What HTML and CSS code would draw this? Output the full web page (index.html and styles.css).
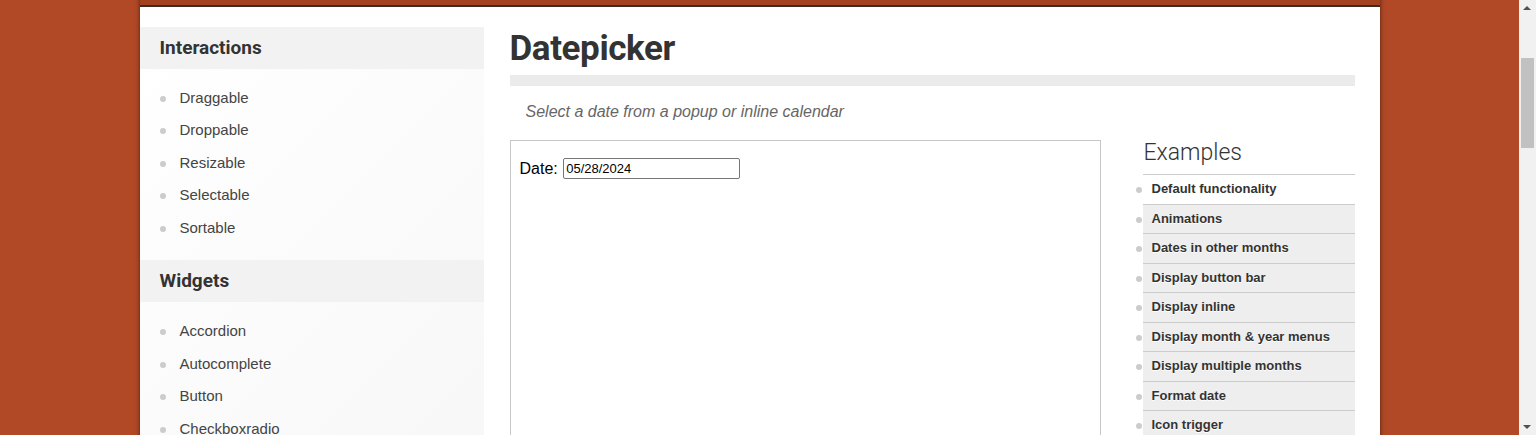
FILE: index.html
```html
<!DOCTYPE html>
<html lang="en">
<head>
<meta charset="utf-8">
<title>Datepicker | jQuery UI</title>
<link rel="stylesheet" href="styles.css">
</head>
<body>
<div class="page">
  <header class="site-header"></header>
  <div class="content">
    <aside class="sidebar">
      <section class="side-section">
        <h3 class="side-title">Interactions</h3>
        <ul class="side-list">
          <li>Draggable</li>
          <li>Droppable</li>
          <li>Resizable</li>
          <li>Selectable</li>
          <li>Sortable</li>
        </ul>
      </section>
      <section class="side-section">
        <h3 class="side-title">Widgets</h3>
        <ul class="side-list">
          <li>Accordion</li>
          <li>Autocomplete</li>
          <li>Button</li>
          <li>Checkboxradio</li>
          <li>Controlgroup</li>
          <li>Datepicker</li>
          <li>Dialog</li>
          <li>Menu</li>
          <li>Progressbar</li>
          <li>Selectmenu</li>
          <li>Slider</li>
          <li>Spinner</li>
          <li>Tabs</li>
          <li>Tooltip</li>
        </ul>
      </section>
    </aside>
    <main class="main">
      <h1 class="page-title">Datepicker</h1>
      <div class="title-bar"></div>
      <p class="subtitle">Select a date from a popup or inline calendar</p>
      <div class="demo-row">
        <div class="demo-frame">
          <label class="date-label">Date: <input class="date-input" type="text" value="05/28/2024"></label>
        </div>
        <div class="examples">
          <h2 class="examples-title">Examples</h2>
          <ul class="examples-list">
            <li class="active">Default functionality</li>
            <li>Animations</li>
            <li>Dates in other months</li>
            <li>Display button bar</li>
            <li>Display inline</li>
            <li>Display month &amp; year menus</li>
            <li>Display multiple months</li>
            <li>Format date</li>
            <li>Icon trigger</li>
            <li>Localize calendar</li>
            <li>Populate alternate field</li>
            <li>Restrict date range</li>
            <li>Select a Date Range</li>
            <li>Show week of the year</li>
          </ul>
        </div>
      </div>
    </main>
  </div>
</div>
<div class="scrollbar" aria-hidden="true">
  <span class="sb-arrow sb-up"></span>
  <span class="sb-thumb"></span>
  <span class="sb-arrow sb-down"></span>
</div>
<script src="script.js"></script>
</body>
</html>
```

FILE: styles.css
```css
html, body {
  margin: 0;
  padding: 0;
}
body {
  background: #b24926;
  font-family: "Liberation Sans", Arial, sans-serif;
  color: #333;
  margin-right: 17px;
}
.page {
  width: 1240px;
  margin: 0 auto;
  box-shadow: 0 0 5px rgba(0, 0, 0, 0.55);
}
.site-header {
  height: 203px;
  background: #a4421f;
  border-bottom: 2px solid #3a2b23;
}
.content {
  background: #fff;
  display: flex;
  padding: 20px 25px 0 0;
  min-height: 1713px;
}
.sidebar {
  width: 344px;
  flex: none;
  background: linear-gradient(135deg, #ffffff 0%, #f4f4f4 100%);
  align-self: flex-start;
}
.side-title {
  margin: 0;
  height: 42px;
  line-height: 42px;
  padding-left: 20px;
  background: #f2f2f2;
  font-family: Roboto, "Open Sans", sans-serif;
  font-weight: 700;
  font-size: 19px;
  color: #333;
}
.side-list {
  list-style: none;
  margin: 0;
  padding: 12.75px 0 16px 0;
}
.side-list li {
  height: 32.5px;
  line-height: 32.5px;
  padding-left: 40px;
  position: relative;
  font-size: 15px;
  color: #444;
}
.side-list li::before {
  content: "";
  position: absolute;
  left: 20px;
  top: 14px;
  width: 6px;
  height: 6px;
  border-radius: 50%;
  background: #cccccc;
}
.main {
  flex: 1;
  margin-left: 26px;
}
.page-title {
  margin: 0;
  height: 48px;
  line-height: 44px;
  font-family: Roboto, "Open Sans", sans-serif;
  font-weight: 700;
  font-size: 35px;
  letter-spacing: -0.4px;
  color: #333;
}
.title-bar {
  height: 11px;
  background: #ebebeb;
}
.subtitle {
  margin: 0;
  height: 54px;
  line-height: 52px;
  padding-left: 16px;
  font-style: italic;
  font-size: 16px;
  color: #666;
}
.demo-row {
  display: flex;
  gap: 42px;
}
.demo-frame {
  width: 591px;
  height: 420px;
  border: 1px solid #c6c6c6;
  padding: 17px 9px;
  box-sizing: border-box;
  flex: none;
}
.date-label {
  font-size: 16px;
  color: #000;
}
.date-input {
  width: 177px;
  height: 21px;
  box-sizing: border-box;
  border: 1px solid #767676;
  border-radius: 2px;
  padding: 1px 2px;
  font-family: "Liberation Sans", Arial, sans-serif;
  font-size: 13px;
  color: #000;
  margin-left: 1px;
  vertical-align: 1px;
}
.examples {
  flex: 1;
}
.examples-title {
  margin: 0;
  height: 34px;
  line-height: 26px;
  padding-left: 1px;
  font-family: Roboto, "Open Sans", sans-serif;
  font-weight: 300;
  font-size: 23px;
  color: #333;
  border-bottom: 1px solid #cccccc;
}
.examples-list {
  list-style: none;
  margin: 0;
  padding: 0;
}
.examples-list li {
  position: relative;
  background: #eeeeee;
  border-top: 1px solid #cccccc;
  line-height: 28.5px;
  height: 28.5px;
  padding-left: 9px;
  font-size: 13px;
  font-weight: 700;
  color: #333;
  text-shadow: 0 1px 0 #fff;
}
.examples-list li.active {
  background: #fff;
  border-top: 0;
}
.examples-list li::before {
  content: "";
  position: absolute;
  left: -7px;
  top: 12px;
  width: 6px;
  height: 6px;
  border-radius: 50%;
  background: #cccccc;
}
.scrollbar {
  position: fixed;
  top: 0;
  right: 0;
  width: 17px;
  height: 100%;
  background: #f1f1f1;
}
.sb-arrow {
  position: absolute;
  left: 4px;
  width: 0;
  height: 0;
  border-left: 4px solid transparent;
  border-right: 4px solid transparent;
}
.sb-up {
  top: 6px;
  border-bottom: 4px solid #505050;
}
.sb-down {
  bottom: 6px;
  border-top: 4px solid #505050;
}
.sb-thumb {
  position: absolute;
  left: 2px;
  top: 58px;
  width: 13px;
  height: 90px;
  background: #c1c1c1;
}
```

FILE: script.js
```js
window.scrollTo(0, 198);
```
